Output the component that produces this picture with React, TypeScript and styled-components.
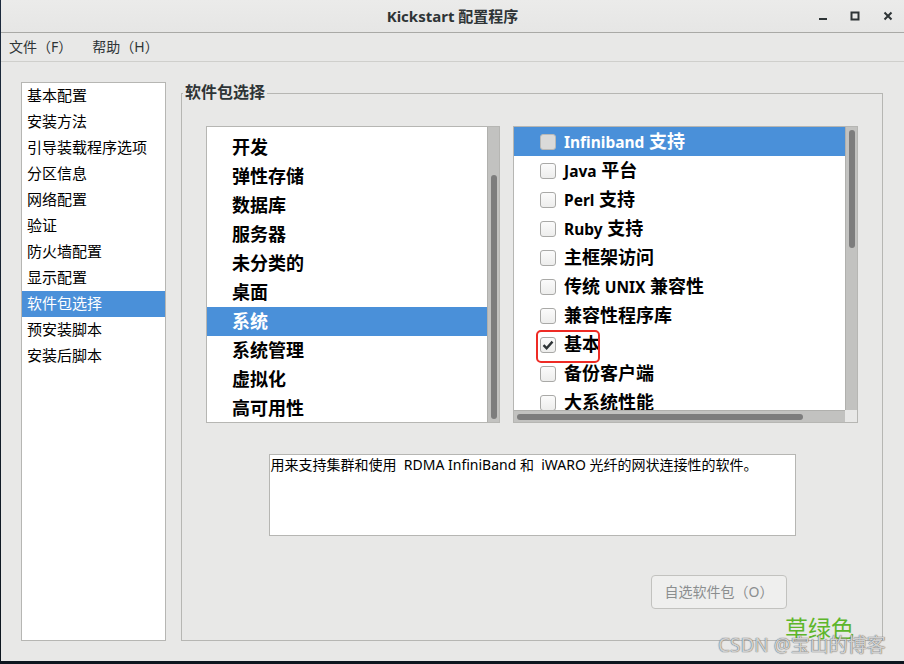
import React from "react";
import styled, { createGlobalStyle } from "styled-components";

const Global = createGlobalStyle`
  html, body { margin: 0; padding: 0; background: #0f1a25; }
  *, *::before, *::after { box-sizing: border-box; }
  body { font-family: "Noto Sans", "Noto Sans CJK SC", sans-serif; }
`;

const CJK = `"Noto Sans", "Noto Sans CJK SC", sans-serif`;

const Desktop = styled.div`
  width: 904px;
  height: 664px;
  display: flex;
  padding: 0 0 3px 1px;
  background: linear-gradient(180deg, #1c2a3d 0%, #0d161f 100%);
`;

const Window = styled.div`
  position: relative;
  flex: 1;
  display: flex;
  flex-direction: column;
  background: #e8e8e7;
  overflow: hidden;
`;

const TitleBar = styled.div`
  height: 33px;
  flex: none;
  display: grid;
  grid-template-columns: 1fr auto 1fr;
  align-items: center;
  border-bottom: 1px solid #a9a9a6;
  background: linear-gradient(180deg, #ebebea 0%, #e6e6e5 100%);
`;

const Title = styled.div`
  grid-column: 2;
  font-family: ${CJK};
  font-size: 15px;
  font-weight: 700;
  color: #2e3436;
  padding-bottom: 2px;
`;

const Controls = styled.div`
  grid-column: 3;
  justify-self: end;
  display: flex;
  align-items: center;
  gap: 17px;
  padding-right: 8px;
  padding-bottom: 1px;
`;

const ControlIcon = styled.svg`
  width: 16px;
  height: 16px;
  display: block;
`;

const MenuBar = styled.div`
  height: 29px;
  flex: none;
  display: flex;
  align-items: center;
  padding-bottom: 2px;
  border-bottom: 1px solid #cfcfcc;
`;

const MenuItem = styled.div`
  padding: 0 12px 0 8px;
  font-family: ${CJK};
  font-size: 14px;
  color: #2e3436;
`;

const Body = styled.div`
  flex: 1;
  display: flex;
  gap: 15px;
  padding: 20px 21px 20px 20px;
  min-height: 0;
`;

const Sidebar = styled.div`
  width: 145px;
  flex: none;
  background: #fff;
  border: 1px solid #b6b6b3;
`;

const SideItem = styled.div<{ $selected?: boolean }>`
  height: 26px;
  line-height: 24px;
  padding: 0 0 2px 5px;
  font-family: ${CJK};
  font-size: 15px;
  color: ${(p) => (p.$selected ? "#fff" : "#000")};
  background: ${(p) => (p.$selected ? "#4a90d9" : "transparent")};
  white-space: nowrap;
`;

const Frame = styled.fieldset`
  flex: 1;
  min-width: 0;
  margin: 0;
  padding: 0;
  border: 1px solid #b6b6b3;
`;

const Legend = styled.legend`
  margin-left: 1px;
  padding: 0 2px 1px;
  font-family: ${CJK};
  font-size: 16px;
  font-weight: 700;
  line-height: 21px;
  color: #2e3436;
`;

const FrameBody = styled.div`
  display: flex;
  flex-direction: column;
  padding: 22px 24px 31px;
`;

const ListsRow = styled.div`
  height: 297px;
  display: flex;
  gap: 13px;
`;

const ListBox = styled.div<{ $width?: number }>`
  ${(p) => (p.$width ? `width: ${p.$width}px; flex: none;` : "flex: 1;")}
  min-width: 0;
  border: 1px solid #b6b6b3;
  background: #fff;
  display: grid;
  overflow: hidden;
`;

const GroupBox = styled(ListBox)`
  grid-template-columns: 1fr 12px;
`;

const OptionBox = styled(ListBox)`
  grid-template-columns: 1fr 12px;
  grid-template-rows: 1fr 12px;
`;

const Viewport = styled.div<{ $offset?: number }>`
  overflow: hidden;
  padding-top: ${(p) => p.$offset ?? 0}px;
  min-width: 0;
  min-height: 0;
`;

const GroupRow = styled.div<{ $selected?: boolean }>`
  height: 29px;
  display: flex;
  align-items: center;
  padding: 0 0 4px 25px;
  font-family: ${CJK};
  font-size: 18px;
  font-weight: 700;
  color: ${(p) => (p.$selected ? "#fff" : "#000")};
  background: ${(p) => (p.$selected ? "#4a90d9" : "transparent")};
  white-space: nowrap;
`;

const OptionRow = styled(GroupRow)`
  position: relative;
  padding-left: 26px;
  gap: 8px;
`;

const OptionLabel = styled.span`
  display: block;
  white-space: pre;
`;

const Latin = styled.span`
  font-size: 15.5px;
`;

const Check = styled.span<{ $onSel?: boolean }>`
  width: 16px;
  height: 16px;
  flex: none;
  margin-top: 4px;
  border-radius: 3px;
  border: 1px solid ${(p) => (p.$onSel ? "#b9b9b7" : "#a9a9a7")};
  background: ${(p) =>
    p.$onSel ? "#dadad9" : "linear-gradient(180deg, #fbfbfb 0%, #ededec 100%)"};
  display: flex;
  align-items: center;
  justify-content: center;
`;

const Annotation = styled.div`
  position: absolute;
  left: 22px;
  top: 0;
  width: 64px;
  height: 33px;
  border: 2.5px solid #ee2b25;
  border-radius: 5px;
  pointer-events: none;
`;

const VTrack = styled.div<{ $start: number; $size: number }>`
  background: #c2c2c0;
  border-left: 1px solid #b0b0ad;
  display: flex;
  flex-direction: column;
  align-items: center;
  padding-top: ${(p) => p.$start}px;
  &::before {
    content: "";
    width: 6px;
    height: ${(p) => p.$size}px;
    border-radius: 3px;
    background: #7d7d7d;
  }
`;

const HTrack = styled.div<{ $start: number; $size: number }>`
  background: #c2c2c0;
  border-top: 1px solid #b0b0ad;
  display: flex;
  align-items: center;
  padding-left: ${(p) => p.$start}px;
  &::before {
    content: "";
    height: 6px;
    width: ${(p) => p.$size}px;
    border-radius: 3px;
    background: #7d7d7d;
  }
`;

const Corner = styled.div`
  background: #e8e8e7;
`;

const Description = styled.div`
  margin-top: 31px;
  align-self: center;
  width: 527px;
  height: 82px;
  border: 1px solid #b6b6b3;
  background: #fff;
  padding: 0 1px;
  font-family: ${CJK};
  font-size: 14px;
  line-height: 19px;
  color: #000;
  white-space: pre;
`;

const ButtonRow = styled.div`
  margin-top: 39px;
  display: flex;
  justify-content: flex-end;
  padding-right: 71px;
`;

const Button = styled.button`
  width: 136px;
  height: 34px;
  border: 1px solid #c2c2bf;
  border-radius: 4px;
  background: #efefee;
  font-family: ${CJK};
  font-size: 14px;
  color: #8b8e8f;
  padding: 0 0 2px;
  cursor: default;
`;

const GreenMark = styled.div`
  position: absolute;
  left: 784px;
  top: 612px;
  font-family: ${CJK};
  font-size: 23px;
  line-height: 32px;
  color: #5db62a;
`;

const CsdnMark = styled.div`
  position: absolute;
  left: 717px;
  top: 631px;
  font-family: ${CJK};
  font-size: 19px;
  line-height: 28px;
  color: rgba(240, 240, 240, 0.8);
  text-shadow: 0 0 1px rgba(80, 80, 80, 0.9), 0 0 1px rgba(80, 80, 80, 0.7);
  white-space: nowrap;
`;

const sidebarItems = [
  "基本配置",
  "安装方法",
  "引导装载程序选项",
  "分区信息",
  "网络配置",
  "验证",
  "防火墙配置",
  "显示配置",
  "软件包选择",
  "预安装脚本",
  "安装后脚本",
];

const groups = ["开发", "弹性存储", "数据库", "服务器", "未分类的", "桌面", "系统", "系统管理", "虚拟化", "高可用性"];

const options = [
  "Infiniband 支持",
  "Java 平台",
  "Perl 支持",
  "Ruby 支持",
  "主框架访问",
  "传统 UNIX 兼容性",
  "兼容性程序库",
  "基本",
  "备份客户端",
  "大系统性能",
];

function Mixed({ text }: { text: string }) {
  const parts = text.split(/([A-Za-z]+)/).filter((s) => s.length > 0);
  return (
    <OptionLabel>
      {parts.map((p, i) => (/^[A-Za-z]+$/.test(p) ? <Latin key={i}>{p}</Latin> : <span key={i}>{p}</span>))}
    </OptionLabel>
  );
}

export default function App() {
  return (
    <>
      <Global />
      <Desktop>
        <Window>
          <TitleBar>
            <Title>Kickstart 配置程序</Title>
            <Controls>
              <ControlIcon viewBox="0 0 16 16">
                <rect x="5" y="10" width="8" height="2" fill="#2e3436" />
              </ControlIcon>
              <ControlIcon viewBox="0 0 16 16">
                <rect x="4.5" y="4.5" width="7" height="7" fill="none" stroke="#2e3436" strokeWidth="2" />
              </ControlIcon>
              <ControlIcon viewBox="0 0 16 16">
                <path d="M4.5 4.5 L11.5 11.5 M11.5 4.5 L4.5 11.5" stroke="#2e3436" strokeWidth="2" />
              </ControlIcon>
            </Controls>
          </TitleBar>
          <MenuBar>
            <MenuItem>文件（F）</MenuItem>
            <MenuItem>帮助（H）</MenuItem>
          </MenuBar>
          <Body>
            <Sidebar>
              {sidebarItems.map((s) => (
                <SideItem key={s} $selected={s === "软件包选择"}>
                  {s}
                </SideItem>
              ))}
            </Sidebar>
            <Frame>
              <Legend>软件包选择</Legend>
              <FrameBody>
                <ListsRow>
                  <GroupBox $width={294}>
                    <Viewport $offset={6}>
                      {groups.map((g) => (
                        <GroupRow key={g} $selected={g === "系统"}>
                          {g}
                        </GroupRow>
                      ))}
                    </Viewport>
                    <VTrack $start={48} $size={244} />
                  </GroupBox>
                  <OptionBox>
                    <Viewport>
                      {options.map((o, i) => (
                        <OptionRow key={o} $selected={i === 0}>
                          <Check $onSel={i === 0}>
                            {o === "基本" && (
                              <svg width="14" height="14" viewBox="0 0 14 14">
                                <path
                                  d="M2.5 7.2 L5.6 10.2 L11.5 3.6"
                                  fill="none"
                                  stroke="#2e3436"
                                  strokeWidth="2.4"
                                />
                              </svg>
                            )}
                          </Check>
                          <Mixed text={o} />
                          {o === "基本" && <Annotation />}
                        </OptionRow>
                      ))}
                    </Viewport>
                    <VTrack $start={3} $size={118} />
                    <HTrack $start={3} $size={286} />
                    <Corner />
                  </OptionBox>
                </ListsRow>
                <Description>用来支持集群和使用  RDMA InfiniBand 和  iWARO 光纤的网状连接性的软件。</Description>
                <ButtonRow>
                  <Button disabled>自选软件包（O）</Button>
                </ButtonRow>
              </FrameBody>
            </Frame>
          </Body>
          <GreenMark>草绿色</GreenMark>
          <CsdnMark>CSDN @宝山的博客</CsdnMark>
        </Window>
      </Desktop>
    </>
  );
}
